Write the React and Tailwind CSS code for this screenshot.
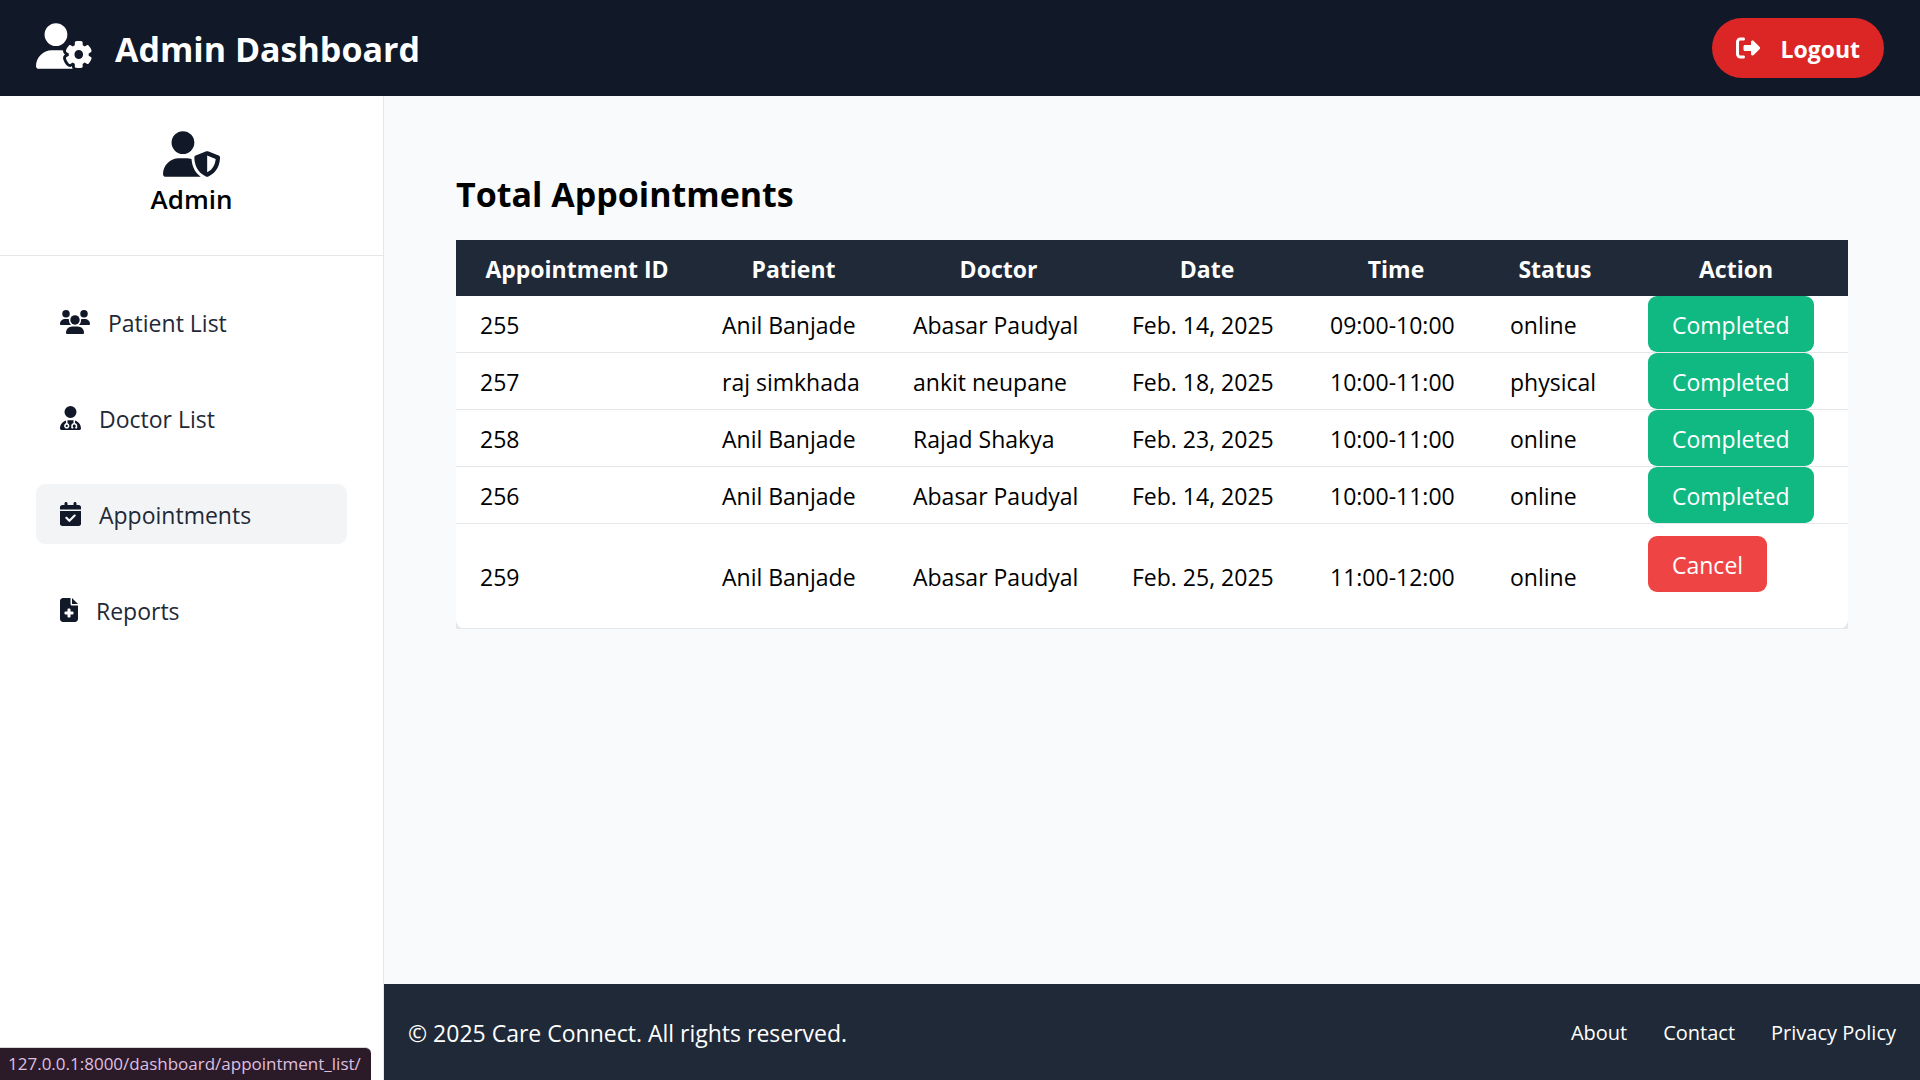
import {
  FaUserGear,
  FaUserShield,
  FaRightFromBracket,
  FaUserDoctor,
  FaCalendarCheck,
  FaFileMedical,
} from "react-icons/fa6";

const navItems = [
  { label: "Patient List", icon: PatientsIcon, width: "w-[30px]" },
  { label: "Doctor List", icon: FaUserDoctor, width: "w-[21px]" },
  { label: "Appointments", icon: FaCalendarCheck, width: "w-[21px]", active: true },
  { label: "Reports", icon: FaFileMedical, width: "w-[18px]" },
];

const columns = [
  { label: "Appointment ID", width: "w-[242px]" },
  { label: "Patient", width: "w-[191px]" },
  { label: "Doctor", width: "w-[219px]" },
  { label: "Date", width: "w-[198px]" },
  { label: "Time", width: "w-[180px]" },
  { label: "Status", width: "w-[138px]" },
  { label: "Action", width: "w-[224px]" },
];

const rows = [
  { cells: ["255", "Anil Banjade", "Abasar Paudyal", "Feb. 14, 2025", "09:00-10:00", "online"] },
  { cells: ["257", "raj simkhada", "ankit neupane", "Feb. 18, 2025", "10:00-11:00", "physical"] },
  { cells: ["258", "Anil Banjade", "Rajad Shakya", "Feb. 23, 2025", "10:00-11:00", "online"] },
  { cells: ["256", "Anil Banjade", "Abasar Paudyal", "Feb. 14, 2025", "10:00-11:00", "online"] },
  { cells: ["259", "Anil Banjade", "Abasar Paudyal", "Feb. 25, 2025", "11:00-12:00", "online"], pending: true },
];

function PatientsIcon({ className }) {
  return (
    <svg viewBox="0 0 640 512" fill="currentColor" className={className} aria-hidden="true">
      <circle cx="128" cy="80" r="80" />
      <circle cx="512" cy="80" r="80" />
      <path d="M0 298.700C0 239.800 47.800 192 106.700 192h42.700c15.900 0 31 3.500 44.600 9.700c-1.300 7.200-1.900 14.700-1.900 22.300c0 38.200 16.800 72.500 43.300 96H21.300C9.600 320 0 310.400 0 298.700z" />
      <path d="M405.300 320h-.7c26.600-23.500 43.300-57.800 43.300-96c0-7.600-.7-15-1.900-22.300c13.600-6.300 28.700-9.700 44.600-9.700h42.700C592.200 192 640 239.800 640 298.700c0 11.800-9.600 21.300-21.300 21.300z" />
      <circle cx="320" cy="212" r="100" />
      <path d="M128 485.300C128 411.700 187.700 352 261.300 352h117.400C452.300 352 512 411.700 512 485.300c0 14.700-11.900 26.700-26.700 26.700H154.700c-14.700 0-26.700-11.900-26.700-26.700z" />
    </svg>
  );
}

function Header() {
  return (
    <header className="flex h-24 shrink-0 items-center justify-between bg-[#111827] px-9 text-white">
      <div className="flex items-center gap-[22px]">
        <FaUserGear className="mb-1 h-[46px] w-[57px]" aria-hidden="true" />
        <h1 className="pt-0.5 text-[34px] leading-[54px] font-bold">Admin Dashboard</h1>
      </div>
      <button
        type="button"
        className="flex h-[60px] items-center gap-5 rounded-full bg-[#dc2626] px-6 pt-0.5 text-[23px] font-bold"
      >
        <FaRightFromBracket className="mb-0.5 size-6" aria-hidden="true" />
        Logout
      </button>
    </header>
  );
}

function Sidebar() {
  return (
    <aside className="w-96 shrink-0 border-r border-[#e5e7eb] bg-white">
      <div className="flex h-40 flex-col items-center border-b border-[#e5e7eb] pt-[35px]">
        <FaUserShield className="h-[46px] w-[57px] text-[#111827]" aria-hidden="true" />
        <p className="mt-1 text-[26px] leading-9 font-semibold">Admin</p>
      </div>
      <nav className="flex flex-col gap-9 p-9">
        {navItems.map(({ label, icon: Icon, width, active }) => (
          <a
            key={label}
            href="#"
            className={`flex h-[60px] items-center gap-[18px] rounded-[9px] px-6 pt-0.5 text-[23px] text-[#1f2937] ${
              active ? "bg-[#f3f4f6]" : ""
            }`}
          >
            <Icon className={`h-6 ${width} mb-0.5 text-[#111827]`} aria-hidden="true" />
            {label}
          </a>
        ))}
      </nav>
    </aside>
  );
}

function AppointmentTable() {
  return (
    <table className="w-full table-fixed border-collapse bg-[#e5e7eb] text-[23px] leading-9 text-black">
      <thead className="bg-[#1f2937] text-white">
        <tr className="h-14">
          {columns.map(({ label, width }) => (
            <th key={label} scope="col" className={`${width} p-0 pt-0.5 font-bold`}>
              {label}
            </th>
          ))}
        </tr>
      </thead>
      <tbody>
        {rows.map(({ cells, pending }) => (
          <tr key={cells[0]} className="group border-b border-[#e5e7eb]">
            {cells.map((cell, i) => (
              <td
                key={i}
                className="bg-white px-6 pt-0.5 whitespace-nowrap group-last:first:rounded-bl-[9px]"
              >
                {cell}
              </td>
            ))}
            <td className={`bg-white px-6 group-last:rounded-br-[9px] ${pending ? "pt-3 pb-9" : ""}`}>
              {pending ? (
                <button type="button" className="block h-14 rounded-[9px] bg-[#ef4444] px-6 pt-0.5 text-white">
                  Cancel
                </button>
              ) : (
                <button type="button" className="block h-14 rounded-[9px] bg-[#10b981] px-6 pt-0.5 text-white">
                  Completed
                </button>
              )}
            </td>
          </tr>
        ))}
      </tbody>
    </table>
  );
}

function Footer() {
  return (
    <footer className="flex h-24 shrink-0 items-center justify-between bg-[#1f2937] px-6 pt-0.5 text-white">
      <p className="text-[23px]">© 2025 Care Connect. All rights reserved.</p>
      <nav className="flex gap-9 text-xl">
        <a href="#">About</a>
        <a href="#">Contact</a>
        <a href="#">Privacy Policy</a>
      </nav>
    </footer>
  );
}

export default function App() {
  return (
    <div className="flex min-h-screen flex-col bg-[#f9fafc] font-['Open_Sans',sans-serif] text-black">
      <Header />
      <div className="flex grow">
        <Sidebar />
        <div className="flex min-w-0 grow flex-col">
          <main className="grow px-[72px] pt-[71px]">
            <h2 className="mb-[19px] text-[34px] leading-[54px] font-bold">Total Appointments</h2>
            <AppointmentTable />
          </main>
          <Footer />
        </div>
      </div>
      <div className="fixed bottom-0 left-0 rounded-tr-md border-t border-[#d9d5d8] bg-[#2b1b28] py-1 pr-2.5 pl-2 text-[17px] leading-6 text-[#dfbfe0]">
        127.0.0.1:8000/dashboard/appointment_list/
      </div>
    </div>
  );
}
